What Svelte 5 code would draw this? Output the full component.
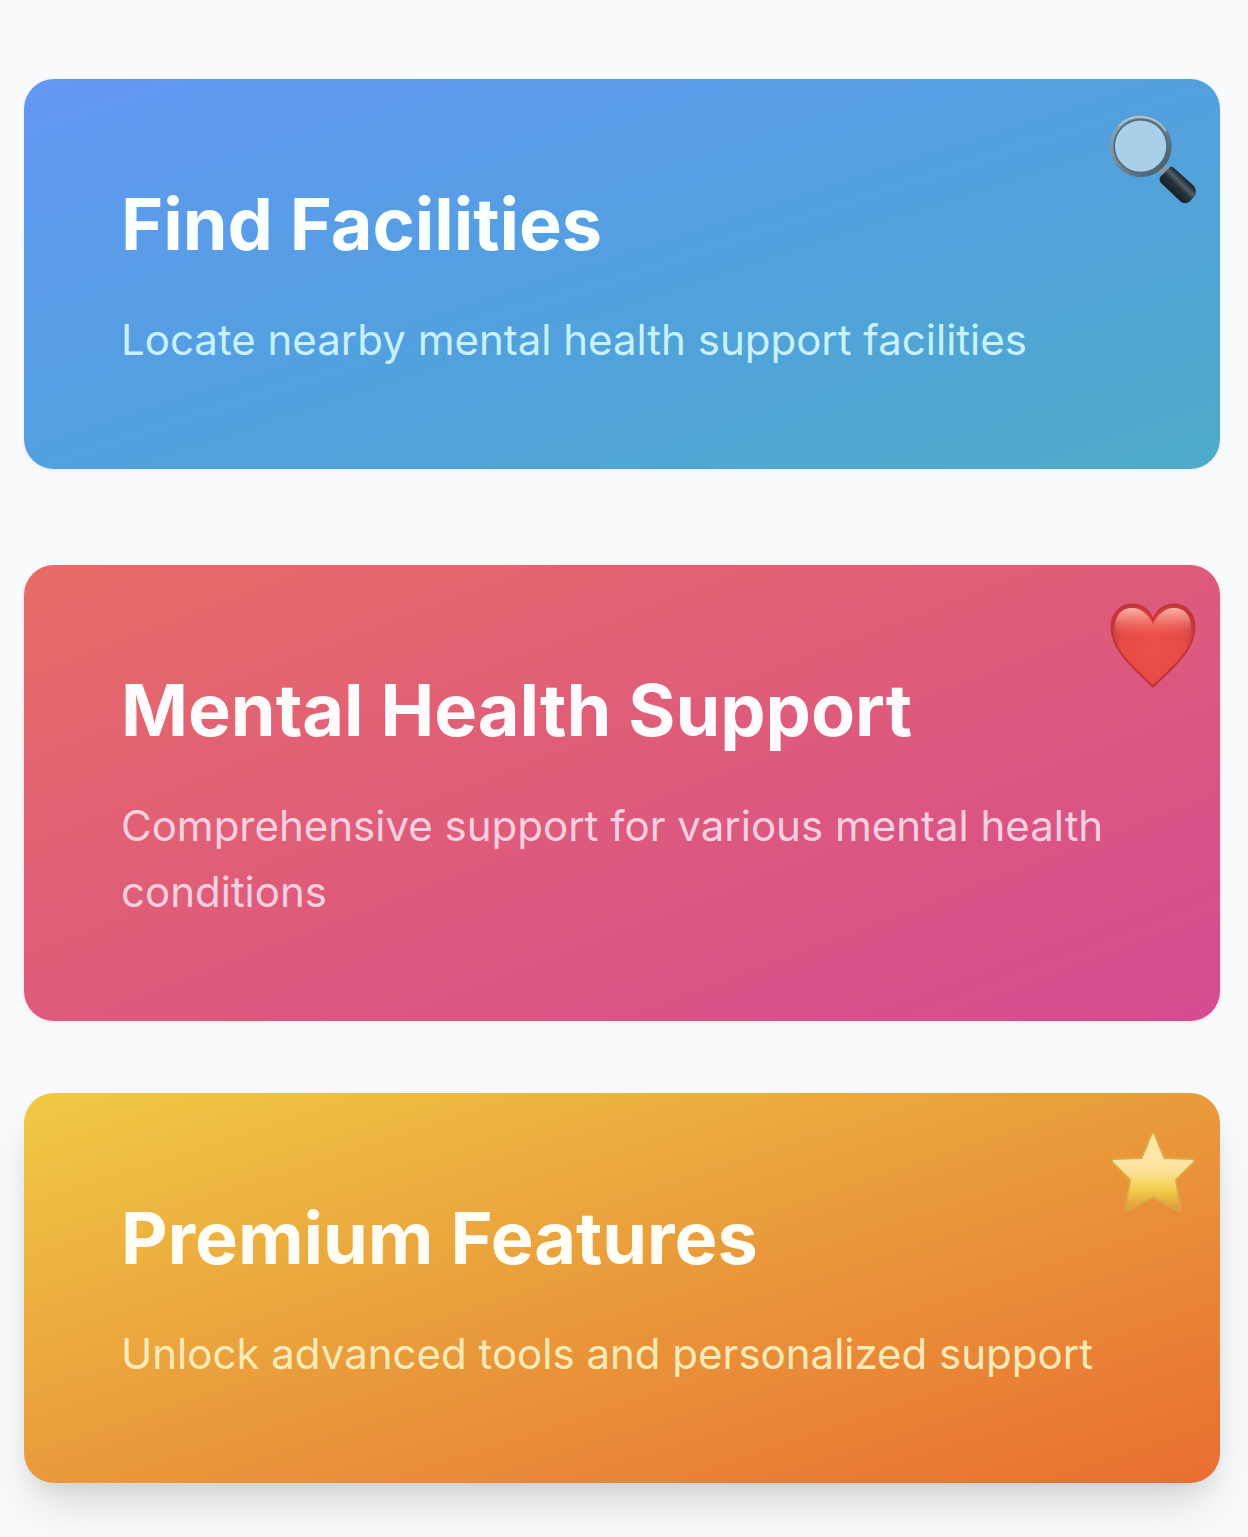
<script>
    const cards = [
        {name:'facilities',title:'Find Facilities',text:'Locate nearby mental health support facilities'},
        {name:'support',title:'Mental Health Support',text:'Comprehensive support for various mental health conditions'},
        {name:'premium',title:'Premium Features',text:'Unlock advanced tools and personalized support'},
    ]
</script>

<main>
    {#each cards as {name,title,text}}
    <section class="card {name}">
        <h2>{title}</h2>
        <p>{text}</p>
        <svg class="icon" viewBox="0 0 96 96" aria-hidden="true">
            {#if name == 'facilities'}
                <defs>
                    <linearGradient id="rim" x1="0" y1="0" x2="1" y2="1">
                        <stop offset="0" stop-color="#86a9c2" />
                        <stop offset=".45" stop-color="#748e9f" />
                        <stop offset="1" stop-color="#42535f" />
                    </linearGradient>
                    <linearGradient id="handle" gradientUnits="userSpaceOnUse" x1="67" y1="79" x2="80" y2="66">
                        <stop offset="0" stop-color="#17232c" />
                        <stop offset=".45" stop-color="#27333c" />
                        <stop offset=".68" stop-color="#535e67" />
                        <stop offset="1" stop-color="#1a2934" />
                    </linearGradient>
                </defs>
                <path d="M54 51.500l10 10" stroke="#8b9ba3" stroke-width="9" />
                <path d="M57 64L66 55Q68 54 70 56L90 74Q93 78 91 84L85 90Q80 93 76 89L57 71Q54 67 57 64Z" fill="url(#handle)" />
                <circle cx="36.600" cy="34.200" r="28.500" fill="#a9d0e8" stroke="url(#rim)" stroke-width="5" />
                <circle cx="36.600" cy="34.200" r="26.500" fill="none" stroke="#4f6b7d" stroke-width="1.800" />
                <path d="M15 14A30 30 0 0 1 62 19" fill="none" stroke="#bdcbd3" stroke-width="1.500" />
            {:else if name == 'support'}
                <defs>
                    <radialGradient id="heart" cx=".5" cy=".55" r=".6">
                        <stop offset="0" stop-color="#ed5047" />
                        <stop offset=".65" stop-color="#e64b45" />
                        <stop offset="1" stop-color="#c4353d" />
                    </radialGradient>
                    <linearGradient id="shine" x1="0" y1="0" x2="0" y2="1">
                        <stop offset="0" stop-color="#ffb3a6" />
                        <stop offset=".35" stop-color="#f68c80" stop-opacity=".8" />
                        <stop offset=".9" stop-color="#f0645b" stop-opacity="0" />
                    </linearGradient>
                </defs>
                <path d="M49 22C44.500 11.500 37 6.500 28 6.500C16 6.500 7.500 16 7.500 29C7.500 51 27 68 49 88.500C71 68 90.500 51 90.500 29C90.500 16 82 6.500 70 6.500C61 6.500 53.500 11.500 49 22Z" fill="url(#heart)" stroke="#bf343b" stroke-width="2" />
                <path d="M11 29C11 17 18 10 28 10C37 10 44 16 49 27C54 16 61 10 70 10C80 10 87 17 87 29Q87 35 84 42H14Q11 35 11 29Z" fill="url(#shine)" />
            {:else}
                <defs>
                    <linearGradient id="star" x1="0" y1="0" x2="0" y2="1">
                        <stop offset="0" stop-color="#fbe8a0" />
                        <stop offset=".3" stop-color="#ffe6a8" />
                        <stop offset=".5" stop-color="#fbe196" />
                        <stop offset=".74" stop-color="#f3cc49" />
                        <stop offset="1" stop-color="#dc9838" />
                    </linearGradient>
                </defs>
                <path d="M49 7Q50.500 7 51 9L60.500 32L89 33Q92 34 89 37L72 54L76.500 83Q76.500 86 73 84L49 71.500L25 84Q21.500 86 21.500 83L26 54L9 37Q6 34 9 33L37.500 32L47 9Q47.500 7 49 7Z" fill="url(#star)" stroke="#e0a646" stroke-width="2" stroke-linejoin="round" />
            {/if}
        </svg>
    </section>
    {/each}
</main>

<style>
    :global(body){
        background: #f9fafc;
    }

    main{
        box-sizing: border-box;
        height: 1537px;
        overflow: hidden;
        padding: 79px 28px 0 24px;
        font-family: Inter, "Liberation Sans", sans-serif;
    }

    .card{
        position: relative;
        padding: 96px 96px 96px 97px;
        border-radius: 30px;
    }

    .facilities{
        margin-bottom: 96px;
        background: linear-gradient(to bottom right, #6497f3, #52a0df 50%, #4eabc8);
        color: #f9feff;
        box-shadow: 0 1px 4px rgba(70, 150, 190, .12);
    }

    .support{
        margin-bottom: 72px;
        background: linear-gradient(to bottom right, #e76c66, #de5b7b 50%, #d54b91);
        color: #fffbfd;
        box-shadow: 0 1px 4px rgba(180, 60, 100, .12);
    }

    .premium{
        background: linear-gradient(to bottom right, #f0c944, #e99a3b 50%, #e96e31);
        color: #fffdf4;
        box-shadow: 0 30px 50px -9px rgba(0, 0, 0, .12), 0 12px 24px -10px rgba(0, 0, 0, .11);
    }

    h2{
        margin: 0 0 34px;
        font-size: 72px;
        line-height: 98px;
        font-weight: 700;
        letter-spacing: -.05px;
    }

    p{
        margin: 0;
        font-size: 42px;
        line-height: 66px;
    }

    .facilities p{
        color: #c8f2ff;
    }

    .support p{
        color: #fbd0e0;
    }

    .premium p{
        color: #fbebb8;
    }

    .icon{
        position: absolute;
        top: 33px;
        right: 20px;
        width: 96px;
        height: 96px;
    }
</style>
